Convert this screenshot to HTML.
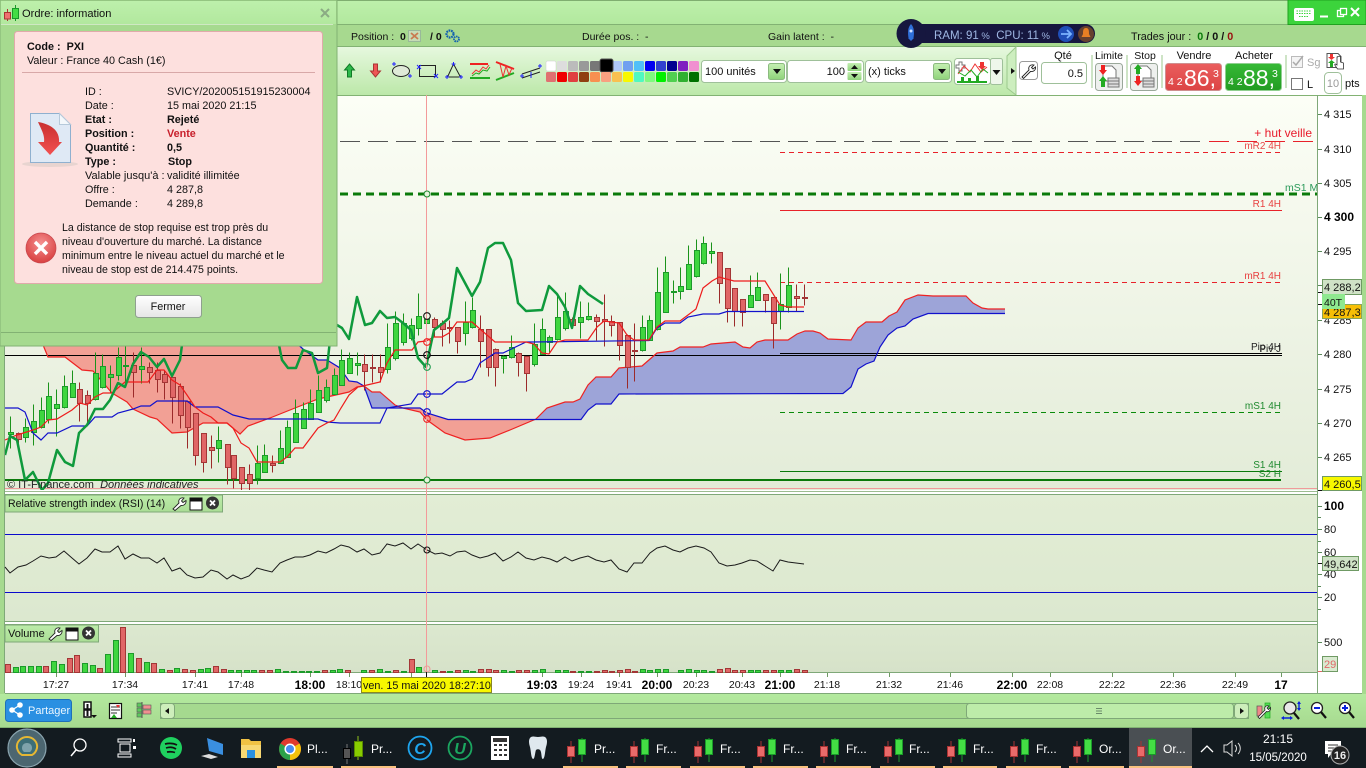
<!DOCTYPE html>
<html lang="fr"><head><meta charset="utf-8"><title>Ordre: information</title>
<style>
html,body{margin:0;padding:0;background:#a6da8f;overflow:hidden}
svg{display:block}
text{font-family:"Liberation Sans",sans-serif;font-size:10.6px;fill:#111;white-space:pre}
.b{font-weight:bold}
.ax{font-size:11px}
.t{font-size:10.5px}
.tb{font-size:12px;font-weight:bold;fill:#000}
.lb{font-size:10px}
.w{fill:#fff;font-size:12px}
.m{text-anchor:middle}
.e{text-anchor:end}
</style></head><body>
<svg width="1366" height="768" viewBox="0 0 1366 768" xmlns="http://www.w3.org/2000/svg">
<defs>
<linearGradient id="gT" x1="0" y1="0" x2="0" y2="1"><stop offset="0" stop-color="#bdf0ab"/><stop offset="1" stop-color="#b2e89e"/></linearGradient>
<linearGradient id="gB" x1="0" y1="0" x2="0" y2="1"><stop offset="0" stop-color="#b4ea9f"/><stop offset="1" stop-color="#a6d98f"/></linearGradient>
<linearGradient id="gTool" x1="0" y1="0" x2="0" y2="1"><stop offset="0" stop-color="#e6f8de"/><stop offset="1" stop-color="#bce8a9"/></linearGradient>
<linearGradient id="gC" x1="0" y1="0" x2="0" y2="1"><stop offset="0" stop-color="#fcfef6"/><stop offset="1" stop-color="#e3ecd8"/></linearGradient>
<linearGradient id="gR" x1="0" y1="0" x2="0" y2="1"><stop offset="0" stop-color="#e2edd5"/><stop offset="1" stop-color="#dce8cf"/></linearGradient>
<linearGradient id="gV" x1="0" y1="0" x2="0" y2="1"><stop offset="0" stop-color="#dce8cf"/><stop offset="1" stop-color="#d6e2c9"/></linearGradient>
<linearGradient id="gLb" x1="0" y1="0" x2="0" y2="1"><stop offset="0" stop-color="#bdecaa"/><stop offset="1" stop-color="#aadd95"/></linearGradient>
<linearGradient id="gSell" x1="0" y1="0" x2="0" y2="1"><stop offset="0" stop-color="#ea5e5e"/><stop offset="1" stop-color="#dc4444"/></linearGradient>
<linearGradient id="gBuy" x1="0" y1="0" x2="0" y2="1"><stop offset="0" stop-color="#36b936"/><stop offset="1" stop-color="#229c22"/></linearGradient>
<linearGradient id="gBtn" x1="0" y1="0" x2="0" y2="1"><stop offset="0" stop-color="#fff"/><stop offset="1" stop-color="#e6e6e6"/></linearGradient>
<linearGradient id="gGrBtn" x1="0" y1="0" x2="0" y2="1"><stop offset="0" stop-color="#c4efb2"/><stop offset="1" stop-color="#8fd37a"/></linearGradient>
<linearGradient id="gArr" x1="0" y1="0" x2="0" y2="1"><stop offset="0" stop-color="#c93030"/><stop offset="1" stop-color="#f25050"/></linearGradient>
<radialGradient id="gErr" cx=".5" cy=".35" r=".7"><stop offset="0" stop-color="#f59090"/><stop offset="1" stop-color="#d63a3a"/></radialGradient>
<clipPath id="cC"><rect x="5" y="96" width="1312" height="394"/></clipPath>
<g id="cd"><path d="M4 -11V11" stroke="#a33" fill="none"/><rect x=".5" y="-5.5" width="7" height="10" fill="#ea6a6a" stroke="#a33"/><path d="M15 -14V10" stroke="#1a9a2a"/><rect x="11.5" y="-12.5" width="7" height="15" fill="#44dd44" stroke="#1a9a2a"/></g>
</defs>

<!-- base -->
<rect width="1366" height="768" fill="#a6da8f"/>
<rect y="0" width="1366" height="24" fill="url(#gT)"/>
<rect width="1366" height="1" fill="#7fae70"/>
<rect y="24" width="1366" height="1" fill="#82b273"/>
<rect y="25" width="1366" height="21" fill="#a7d98f"/>
<rect y="46" width="1366" height="1" fill="#82b273"/>
<rect y="47" width="1366" height="48" fill="url(#gTool)"/>
<path d="M1016 95V47H1366V95Z" fill="#fff"/>
<path d="M1007 88V56L1016 47V95Z" fill="#cdeebf" stroke="#9cc98d"/>
<rect x="5" y="95" width="1357" height="598" fill="#fff"/>
<rect y="95" width="1366" height="1" fill="#82b273"/>
<rect x="1362" y="95" width="4" height="633" fill="#a6da8f"/>
<rect x="0" y="95" width="4" height="633" fill="#a6da8f"/>
<rect x="4" y="95" width="1" height="598" fill="#7fa878"/>

<!-- chart -->
<rect x="5" y="96" width="1312" height="394" fill="url(#gC)"/>
<g clip-path="url(#cC)">
<polygon fill="#f2a095" points="36,333 41,340 48,357 65,357 82,370 93,371 112,393 127,402 133,409 150,417 157,419 172,433 187,432 203,423 227,423 240,434 248,426 270,418 295,408 318,399 349,392 357,387 364,386 357,382 349,381 340,368 327,360 318,360 303,349 293,340 285,333"/>
<polygon fill="#f2a095" points="396,406 403,408 420,412 427,420 445,433 465,440 490,438 510,430 536,419 448,419 427,413 420,408 396,408"/>
<polygon fill="#9da4d8" points="364,386 372,392 380,392 395,405 396,408 372,408"/>
<polygon fill="#9da4d8" points="536,419 547,408 565,402 573,402 580,399 588,385 596,377 611,377 619,368 642,366 657,353 673,351 680,347 703,347 711,344 735,342 743,347 750,348 757,342 765,340 788,340 797,334 805,331 813,331 820,333 828,339 851,340 858,328 866,322 882,322 889,316 897,312 905,300 918,295 933,296 966,296 973,303 982,308 988,309 1005,309 1005,313 928,313 913,319 905,326 897,328 888,335 880,347 874,361 866,364 858,369 851,387 843,393 619,394 611,404 596,404 588,410 581,419"/>

<!-- horizontal levels -->
<path d="M340 141.5H1200" stroke="#555" stroke-dasharray="20 8" fill="none"/>
<path d="M1209 141.5H1313" stroke="#e8222a" stroke-dasharray="20 8" fill="none"/>
<path d="M780 152.5H1282" stroke="#e8222a" stroke-dasharray="5 4" fill="none"/>
<path d="M340 194H1317" stroke="#0a7a0a" stroke-width="3" stroke-dasharray="8 5" fill="none"/>
<path d="M780 210.5H1282" stroke="#e8222a" fill="none"/>
<path d="M780 282.5H1282" stroke="#e8222a" stroke-dasharray="5 4" fill="none"/>
<path d="M780 412.5H1282" stroke="#0a8a0a" stroke-dasharray="5 4" fill="none"/>
<path d="M780 471.5H1282" stroke="#0a7a0a" fill="none"/>
<path d="M5 480H1281" stroke="#0a7a0a" stroke-width="2" fill="none"/>
<path d="M5 488.5H1317" stroke="#f09a9a" fill="none"/>
<path d="M780 353.5H1282" stroke="#000" fill="none"/>
<path d="M5 355.5H1282" stroke="#000" fill="none"/>

<!-- senkou -->
<polyline fill="none" stroke="#ee2222" stroke-width="1.2" points="36,333 41,340 48,357 65,357 82,370 93,371 112,393 127,402 133,409 150,417 157,419 172,433 187,432 203,423 227,423 240,434 248,426 270,418 295,408 318,399 349,392 357,387 364,386 372,392 380,392 395,405 403,408 420,412 427,420 445,433 465,440 490,438 510,430 536,419 547,408 565,402 573,402 580,399 588,385 596,377 611,377 619,368 642,366 657,353 673,351 680,347 703,347 711,344 735,342 743,347 750,348 757,342 765,340 788,340 797,334 805,331 813,331 820,333 828,339 851,340 858,328 866,322 882,322 889,316 897,312 905,300 918,295 933,296 966,296 973,303 982,308 988,309 1005,309"/>
<polyline fill="none" stroke="#1111cc" stroke-width="1.2" points="285,333 293,340 303,349 318,360 327,360 340,368 349,381 357,382 364,386 372,408 395,408 420,408 427,413 448,419.5 581,419.5 588,410 596,404 611,404 619,394 843,393.5 851,387 858,369 866,364 874,361 880,347 888,335 897,328 905,326 913,319 928,313.5 1005,313.5"/>

<!-- candles -->
<g transform="translate(.5,.5)">
<path fill="none" stroke="#1b931b" d="M10 416V448M25 418V442M33 404V445M41 397V428M48 382V423M56 389V436M64 375V408M72 370V397M95 352V400M102 354V388M110 365V393M118 347V380M125 340V381M141 347V383M218 426V462M257 445V484M264 444V472M280 430V463M287 420V457M295 399V442M303 402V428M310 389V419M318 375V412M326 379V402M334 368V394M341 349V385M349 352V373M357 352V375M387 323V373M395 311V360M403 313V345M411 318V340M418 293V335M426 313V325M465 301V345M472 297V328M503 355V373M511 335V358M534 323V366M542 318V354M549 335V352M557 296V340M565 292V330M580 301V338M588 302V320M642 315V351M649 315V340M657 267V330M665 256V312M673 280V303M680 267V299M688 245V289M696 239V277M703 236V264M711 242V263M750 275V307M757 272V300M780 273V329M788 267V312"/>
<path fill="none" stroke="#9b2a2a" d="M18 432V446M79 382V421M87 390V423M133 352V397M149 362V383M157 362V392M164 370V399M172 377V423M180 383V428M187 400V448M195 413V465M203 433V472M211 435V468M227 444V484M233 455V488M241 467V492M249 464V492M272 455V472M364 354V390M372 354V382M380 354V382M434 317V337M442 320V346M449 320V343M457 327V353M480 315V367M488 329V376M495 348V386M518 352V376M526 356V391M572 317V328M596 314V340M604 294V346M611 315V336M619 322V360M627 334V388M634 323V381M719 252V303M727 268V322M734 288V326M742 299V326M765 294V312M773 297V348M796 284V311M804 284V305"/>
<path fill="#3fd63f" stroke="#1c9a2a" d="M8 432h5V434h-5zM23 427h5V437h-5zM31 421h5V432h-5zM39 410h5V427h-5zM46 396h5V419h-5zM54 404h5V408h-5zM62 386h5V407h-5zM70 383h5V397h-5zM93 373h5V399h-5zM100 366h5V387h-5zM108 374h5V377h-5zM116 357h5V375h-5zM123 365h5V366h-5zM139 366h5V369h-5zM216 440h5V448h-5zM255 463h5V478h-5zM262 455h5V472h-5zM278 448h5V463h-5zM285 427h5V457h-5zM293 413h5V442h-5zM301 409h5V428h-5zM308 403h5V419h-5zM316 390h5V412h-5zM324 387h5V400h-5zM332 375h5V394h-5zM339 360h5V385h-5zM347 358h5V373h-5zM355 363h5V365h-5zM385 347h5V369h-5zM393 323h5V358h-5zM401 323h5V342h-5zM409 325h5V338h-5zM416 316h5V328h-5zM424 319h5V323h-5zM463 322h5V333h-5zM470 310h5V327h-5zM501 356h5V358h-5zM509 347h5V357h-5zM532 344h5V364h-5zM540 329h5V354h-5zM547 337h5V342h-5zM555 317h5V339h-5zM563 311h5V328h-5zM578 317h5V322h-5zM586 316h5V319h-5zM640 327h5V350h-5zM647 320h5V340h-5zM655 292h5V329h-5zM663 272h5V312h-5zM671 291h5V292h-5zM678 286h5V291h-5zM686 264h5V289h-5zM694 250h5V276h-5zM701 243h5V263h-5zM709 251h5V253h-5zM748 295h5V307h-5zM755 287h5V300h-5zM778 304h5V311h-5zM786 285h5V307h-5z"/>
<path fill="#e06666" stroke="#a33636" d="M16 433h5V439h-5zM77 389h5V403h-5zM85 395h5V403h-5zM131 365h5V372h-5zM147 367h5V372h-5zM155 370h5V379h-5zM162 374h5V382h-5zM170 377h5V397h-5zM178 386h5V415h-5zM185 401h5V427h-5zM193 413h5V455h-5zM201 433h5V462h-5zM209 447h5V450h-5zM225 444h5V467h-5zM231 455h5V478h-5zM239 467h5V483h-5zM247 474h5V483h-5zM270 463h5V465h-5zM362 364h5V371h-5zM370 367h5V368h-5zM378 367h5V372h-5zM432 319h5V327h-5zM440 323h5V329h-5zM447 327h5V328h-5zM455 327h5V341h-5zM478 329h5V341h-5zM486 329h5V367h-5zM493 349h5V367h-5zM516 353h5V362h-5zM524 356h5V373h-5zM570 319h5V325h-5zM594 317h5V321h-5zM602 319h5V321h-5zM609 321h5V325h-5zM617 322h5V345h-5zM625 335h5V367h-5zM632 350h5V351h-5zM717 252h5V283h-5zM725 268h5V308h-5zM732 288h5V311h-5zM740 299h5V312h-5zM763 294h5V300h-5zM771 297h5V323h-5zM794 296h5V298h-5zM802 297h5V298h-5z"/>
</g>

<!-- tenkan / kijun -->
<polyline fill="none" stroke="#1111cc" stroke-width="1.2" points="5,408 18,408 25,412 33,433 41,440 48,433 57,433 72,426 87,426 95,417 112,417 118,413 133,409 141,406 150,406 157,401 187,401 195,407 218,407 233,415 249,419 318,419 327,422 340,423 380,423 387,408 411,404 418,394 442,394 457,382 465,382 472,379 480,363 495,353 503,353 526,342 533,342 649,340.5 657,328 665,323 680,323 688,317 703,314 719,314 727,311.5 804,311.5"/>
<polyline fill="none" stroke="#ee1c1c" stroke-width="1.2" points="5,440 17,435 33,430 41,427 48,420 57,419 72,410 80,403 87,405 95,397 103,393 112,393 125,382 133,382 148,382 157,370 164,370 172,380 180,385 187,395 195,407 203,413 211,417 218,423 227,423 233,428 241,443 249,448 257,462 280,462 287,457 295,448 303,448 318,428 327,423 334,420 341,408 349,395 358,387 367,385 380,382 387,363 395,350 412,350 418,342 426,341 434,337 442,337 449,333 457,322 472,322 480,329 495,342 526,342 534,344 542,353 549,354 557,342 565,340 588,340 597,327 604,321 619,323 627,335 634,340 649,340 657,327 665,321 680,321 696,309 703,288 712,281 719,277 734,281 765,281 780,305 788,307 804,307"/>
<!-- chikou -->
<polyline fill="none" stroke="#0f9a3c" stroke-width="2.5" stroke-linejoin="round" points="5,455 10,436 17,440 25,480 33,472 42,490 48,483 57,450 65,462 73,466 79,433 87,425 95,409 103,409 110,400 118,383 125,387 133,364 141,352 149,357 157,367 164,359 172,376 180,360 184,330"/>
<polyline fill="none" stroke="#0f9a3c" stroke-width="2.5" stroke-linejoin="round" points="278,340 282,360 288,368 296,368 303,350 312,353 318,373 327,368 330,340 337,325 342,328 349,339 357,297 365,325 372,323 380,311 387,318 395,317 403,323 411,330 418,358 426,367 434,330 442,324 449,318 457,268 472,296 480,282 488,248 495,243 503,243 511,260 518,303 526,311 542,310 549,286 557,294 565,307 572,328 580,286 588,294 603,304"/>

<!-- labels in chart -->
<text x="1312" y="137" class="e" style="font-size:12px;fill:#e81a2a">+ hut veille</text>
<text x="1281" y="149" class="e lb" style="fill:#e84a4a">mR2 4H</text>
<text x="1285" y="191" style="font-size:10.5px;fill:#2a9a5a">mS1 M</text>
<text x="1281" y="207" class="e lb" style="fill:#e84040">R1 4H</text>
<text x="1281" y="279" class="e lb" style="fill:#e84040">mR1 4H</text>
<text x="1281" y="350" class="e lb" style="fill:#222">Pip 4H</text>
<text x="1281" y="352" class="e lb" style="fill:#222">Piv J</text>
<text x="1281" y="409" class="e lb" style="fill:#1f8a2f">mS1 4H</text>
<text x="1281" y="468" class="e lb" style="fill:#1f8a2f">S1 4H</text>
<text x="1281" y="477" class="e lb" style="fill:#1f8a2f">S2 H</text>
<text x="7" y="488" style="font-size:11px;fill:#222">© IT-Finance.com  <tspan font-style="italic">Données indicatives</tspan></text>
</g>
<path d="M5 491.5H1317" stroke="#9cbc90"/>
<path d="M1317.5 95V693" stroke="#7fa878"/>

<!-- RSI pane -->
<rect x="4.5" y="494.5" width="1313" height="127" fill="url(#gR)" stroke="#7fa878"/>
<path d="M5 534.5H1317M5 592.5H1317" stroke="#0a0acc" fill="none"/>
<polyline fill="none" stroke="#1a1a1a" points="5,567 10,573 18,567 26,565 33,561 41,556 49,558 56,557 64,551 72,558 79,564 87,558 95,549 102,552 110,552 118,546 125,559 133,554 141,558 149,558 157,563 164,558 172,571 180,568 187,575 195,578 203,577 211,570 218,572 227,579 233,575 241,579 249,576 257,568 264,570 272,572 280,563 287,560 295,557 303,557 310,555 318,551 326,553 334,549 341,545 349,547 357,552 364,549 372,555 380,553 387,544 395,546 403,543 411,549 418,544 427,550 435,554 442,553 450,556 457,552 465,551 472,555 480,558 488,556 495,553 503,561 511,557 518,552 526,558 534,560 542,557 550,559 557,562 565,557 572,561 580,558 588,556 596,560 604,562 611,560 619,569 627,572 634,563 642,563 650,553 657,548 665,546 673,550 680,552 688,548 696,546 704,548 711,552 719,563 727,566 735,565 742,563 750,560 757,561 765,566 773,571 780,560 788,562 796,563 804,564"/>

<!-- volume pane -->
<rect x="4.5" y="624.5" width="1313" height="48" fill="url(#gV)" stroke="#7fa878"/>
<g transform="translate(.5,.5)">
<path fill="#3fd63f" stroke="#1c9a2a" d="M13 667h5V672h-5zM20 666h5V672h-5zM28 666h5V672h-5zM36 666h5V672h-5zM51 661h5V672h-5zM59 664h5V672h-5zM82 663h5V672h-5zM90 665h5V672h-5zM105 654h5V672h-5zM113 640h5V672h-5zM128 653h5V672h-5zM144 662h5V672h-5zM159 669h5V672h-5zM174 668h5V672h-5zM198 669h5V672h-5zM205 668h5V672h-5zM228 670h5V672h-5zM236 670h5V672h-5zM244 670h5V672h-5zM251 670h5V672h-5zM275 669h5V672h-5zM283 671h5V672h-5zM291 671h5V672h-5zM299 671h5V672h-5zM306 671h5V672h-5zM314 671h5V672h-5zM330 670h5V672h-5zM337 669h5V672h-5zM361 670h5V672h-5zM377 669h5V672h-5zM385 671h5V672h-5zM401 671h5V672h-5zM416 667h5V672h-5zM432 670h5V672h-5zM447 671h5V672h-5zM463 670h5V672h-5zM470 671h5V672h-5zM501 670h5V672h-5zM509 671h5V672h-5zM532 670h5V672h-5zM540 669h5V672h-5zM555 670h5V672h-5zM563 670h5V672h-5zM578 671h5V672h-5zM586 671h5V672h-5zM640 669h5V672h-5zM647 670h5V672h-5zM655 669h5V672h-5zM663 669h5V672h-5zM678 670h5V672h-5zM686 669h5V672h-5zM694 670h5V672h-5zM701 670h5V672h-5zM709 671h5V672h-5zM748 670h5V672h-5zM755 670h5V672h-5zM778 670h5V672h-5zM786 670h5V672h-5z"/>
<path fill="#e06666" stroke="#a33636" d="M5 664h5V672h-5zM43 666h5V672h-5zM67 658h5V672h-5zM74 655h5V672h-5zM97 668h5V672h-5zM120 627h5V672h-5zM136 658h5V672h-5zM151 663h5V672h-5zM167 670h5V672h-5zM182 669h5V672h-5zM190 670h5V672h-5zM213 666h5V672h-5zM221 669h5V672h-5zM259 670h5V672h-5zM267 670h5V672h-5zM322 670h5V672h-5zM345 670h5V672h-5zM369 670h5V672h-5zM393 670h5V672h-5zM409 659h5V672h-5zM440 671h5V672h-5zM455 670h5V672h-5zM478 669h5V672h-5zM486 669h5V672h-5zM493 670h5V672h-5zM516 670h5V672h-5zM524 670h5V672h-5zM570 671h5V672h-5zM594 671h5V672h-5zM602 670h5V672h-5zM609 671h5V672h-5zM617 670h5V672h-5zM625 669h5V672h-5zM632 671h5V672h-5zM717 669h5V672h-5zM725 668h5V672h-5zM732 670h5V672h-5zM740 670h5V672h-5zM763 670h5V672h-5zM771 670h5V672h-5zM794 669h5V672h-5zM802 670h5V672h-5z"/>
</g>

<!-- crosshair -->
<path d="M426.5 95V672" stroke="#f39a9a" fill="none"/>
<g fill="none" stroke-width="1.1">
<circle cx="427" cy="194" r="3" stroke="#1f8a2f" fill="#e6f4dc"/>
<circle cx="427" cy="316" r="3.3" stroke="#111"/>
<circle cx="427" cy="342" r="3.3" stroke="#ee2222"/>
<circle cx="427" cy="355" r="3.3" stroke="#111"/>
<circle cx="427" cy="367" r="3.3" stroke="#1f9a4f"/>
<circle cx="427" cy="394" r="3.3" stroke="#1111cc"/>
<circle cx="427" cy="412" r="3.3" stroke="#1111cc"/>
<circle cx="427" cy="419" r="3.3" stroke="#ee2222"/>
<circle cx="427" cy="480" r="3" stroke="#1f8a2f" fill="#e6f4dc"/>
<circle cx="427" cy="550" r="3" stroke="#111"/>
<circle cx="427" cy="669" r="3" stroke="#f09a9a"/>
</g>

<!-- RSI & volume label boxes -->
<rect x="5" y="495" width="217.5" height="17" fill="url(#gLb)" stroke="#7fa878"/>
<text x="8" y="507" style="font-size:10.6px">Relative strength index (RSI) (14)</text>
<path d="M173 509l6-6c-1-3 1-6 5-5l-2.5 3 1.5 1.5 3-2c.5 3-2 5.5-5 5l-6 5z" fill="#fff" stroke="#222" stroke-width=".9"/>
<rect x="190" y="498" width="12" height="12" fill="#fff" stroke="#111"/><rect x="190" y="498" width="12" height="3.5" fill="#111"/>
<circle cx="212.5" cy="503" r="6.5" fill="#333"/><path d="M210 500.5l5 5M215 500.5l-5 5" stroke="#fff" stroke-width="1.8"/>

<rect x="5" y="625" width="93.5" height="17" fill="url(#gLb)" stroke="#7fa878"/>
<text x="8" y="637" style="font-size:11px">Volume</text>
<path d="M49 639l6-6c-1-3 1-6 5-5l-2.5 3 1.5 1.5 3-2c.5 3-2 5.5-5 5l-6 5z" fill="#fff" stroke="#222" stroke-width=".9"/>
<rect x="66" y="628" width="12" height="12" fill="#fff" stroke="#111"/><rect x="66" y="628" width="12" height="3.5" fill="#111"/>
<circle cx="88.5" cy="633" r="6.5" fill="#333"/><path d="M86 630.5l5 5M91 630.5l-5 5" stroke="#fff" stroke-width="1.8"/>

<!-- price axis -->
<path d="M1318 114.5h4M1318 149.5h4M1318 183.5h4M1318 217.5h4M1318 251.5h4M1318 285.5h4M1318 320.5h4M1318 354.5h4M1318 389.5h4M1318 423.5h4M1318 457.5h4M1318 506.5h4M1318 517.5h3M1318 529.5h4M1318 541.5h3M1318 552.5h4M1318 574.5h4M1318 586.5h3M1318 597.5h4M1318 609.5h3M1318 642.5h4" stroke="#5b8a5b"/>
<path d="M1318 292.5h4M1318 304.5h4M1318 490.5h4M1318 563.5h4" stroke="#111"/>
<path d="M1318 671.5h4" stroke="#e06666"/>
<text x="1324" y="118" class="ax">4 315</text>
<text x="1324" y="153" class="ax">4 310</text>
<text x="1324" y="187" class="ax">4 305</text>
<text x="1324" y="221" class="b" style="font-size:12px;fill:#000">4 300</text>
<text x="1324" y="255" class="ax">4 295</text>
<text x="1324" y="324" class="ax">4 285</text>
<text x="1324" y="358" class="ax">4 280</text>
<text x="1324" y="393" class="ax">4 275</text>
<text x="1324" y="427" class="ax">4 270</text>
<text x="1324" y="461" class="ax">4 265</text>
<rect x="1322.5" y="279.5" width="39" height="15" fill="#cfe2c6" stroke="#6f9a64"/>
<text x="1324" y="291" class="ax">4 288,2</text>
<rect x="1322.5" y="304.5" width="39" height="14" fill="#f7bf06" stroke="#8aa55a"/>
<text x="1324" y="316" class="ax">4 287,3</text>
<rect x="1322" y="294" width="23" height="15" fill="#8fe88f"/>
<text x="1324" y="306" style="font-size:10.5px">40T</text>
<rect x="1322.5" y="476.5" width="39" height="14" fill="#f8f800" stroke="#6f9a64"/>
<text x="1324" y="488" class="ax">4 260,5</text>

<text x="1324" y="510" class="b" style="font-size:12px;fill:#000">100</text>
<text x="1324" y="533" class="ax">80</text>
<text x="1324" y="556" class="ax">60</text>
<text x="1324" y="578" class="ax">40</text>
<rect x="1322.5" y="556.5" width="36" height="14" fill="#cfe2c6" stroke="#6f9a64"/>
<text x="1324" y="568" class="ax">49,642</text>
<text x="1324" y="601" class="ax">20</text>
<text x="1324" y="646" class="ax">500</text>
<rect x="1322.5" y="656.5" width="15" height="15" fill="#d9ead0" stroke="#6f9a64"/>
<text x="1324" y="668" class="ax" style="fill:#e06868">29</text>

<!-- time axis -->
<path d="M56.5 673v4M125.5 673v4M195.5 673v4M241.5 673v4M310.5 673v4M349.5 673v4M411.5 673v4M542.5 673v4M581.5 673v4M619.5 673v4M657.5 673v4M696.5 673v4M742.5 673v4M780.5 673v4M827.5 673v4M889.5 673v4M950.5 673v4M1012.5 673v4M1050.5 673v4M1112.5 673v4M1173.5 673v4M1235.5 673v4M1281.5 673v4" stroke="#6f9a64"/>
<path d="M426.5 672v5" stroke="#111"/>
<text x="56" y="688" class="t m">17:27</text>
<text x="125" y="688" class="t m">17:34</text>
<text x="195" y="688" class="t m">17:41</text>
<text x="241" y="688" class="t m">17:48</text>
<text x="310" y="689" class="tb m">18:00</text>
<text x="349" y="688" class="t m">18:10</text>
<text x="542" y="689" class="tb m">19:03</text>
<text x="581" y="688" class="t m">19:24</text>
<text x="619" y="688" class="t m">19:41</text>
<text x="657" y="689" class="tb m">20:00</text>
<text x="696" y="688" class="t m">20:23</text>
<text x="742" y="688" class="t m">20:43</text>
<text x="780" y="689" class="tb m">21:00</text>
<text x="827" y="688" class="t m">21:18</text>
<text x="889" y="688" class="t m">21:32</text>
<text x="950" y="688" class="t m">21:46</text>
<text x="1012" y="689" class="tb m">22:00</text>
<text x="1050" y="688" class="t m">22:08</text>
<text x="1112" y="688" class="t m">22:22</text>
<text x="1173" y="688" class="t m">22:36</text>
<text x="1235" y="688" class="t m">22:49</text>
<text x="1281" y="689" class="tb m">17</text>
<rect x="361.5" y="677.5" width="130" height="15" fill="#f8f800" stroke="#8a8a20"/>
<text x="363" y="689" style="font-size:10.8px">ven. 15 mai 2020 18:27:10</text>
<path d="M5 693.5H1362" stroke="#7fa878"/>

<!-- bottom toolbar -->
<rect x="0" y="694" width="1366" height="34" fill="url(#gB)"/>
<path d="M0 727.5H1366" stroke="#82b273"/>
<rect x="5.5" y="699.5" width="66" height="22" rx="3" fill="#2a90e2" stroke="#1f70b8"/>
<circle cx="12" cy="710" r="2.8" fill="#fff"/><circle cx="20" cy="705" r="2.8" fill="#fff"/><circle cx="20" cy="715" r="2.8" fill="#fff"/><path d="M12 710L20 705M12 710L20 715" stroke="#fff" stroke-width="1.2"/>
<text x="28" y="714" style="font-size:11px;fill:#eaf6ff">Partager</text>
<!-- link icon -->
<path d="M84 702h7v7h-7zM84 710h7v7h-7z" fill="#fff" stroke="#111" stroke-width="1.5"/><path d="M87.5 704v12" stroke="#111" stroke-width="2"/><path d="M91 715h6l-3 3z" fill="#111"/>
<rect x="109.5" y="703.5" width="12" height="15" fill="#fff" stroke="#111" stroke-width="1.2"/><path d="M111 707h9M111 710h9M111 713h6" stroke="#333"/><path d="M116 705l4 0-2 3z" fill="#e33"/><path d="M111 718l3-4 3 4z" fill="#2a2"/>
<rect x="137" y="703" width="5" height="4" fill="#5cc85c" stroke="#555" stroke-width=".6"/><rect x="143" y="705" width="8" height="4" fill="#f09090" stroke="#555" stroke-width=".6"/><rect x="137" y="708" width="5" height="4" fill="#5cc85c" stroke="#555" stroke-width=".6"/><rect x="143" y="710" width="8" height="4" fill="#f09090" stroke="#555" stroke-width=".6"/><rect x="137" y="713" width="5" height="4" fill="#5cc85c" stroke="#555" stroke-width=".6"/><path d="M142 702v16" stroke="#555"/>
<!-- scrollbar -->
<rect x="160.5" y="703.5" width="1088" height="15" fill="#a5d98f" stroke="#7fa878"/>
<rect x="160.5" y="703.5" width="14" height="15" rx="3" fill="#cdeebb" stroke="#7fa878"/><path d="M169 708v6l-4-3z" fill="#111"/>
<rect x="966.5" y="703.5" width="267" height="15" rx="3" fill="#bdeca9" stroke="#7fa878"/><path d="M1096 708.5h6M1096 711h6M1096 713.5h6" stroke="#6a8a6a"/>
<rect x="1234.5" y="703.5" width="14" height="15" rx="3" fill="#cdeebb" stroke="#7fa878"/><path d="M1240 708v6l4-3z" fill="#111"/>
<!-- zoom icons -->
<rect x="1257" y="706" width="5" height="10" fill="#e88" stroke="#555" stroke-width=".7"/><rect x="1265" y="703" width="5" height="15" fill="#5d5" stroke="#2a2" stroke-width=".7"/><path d="M1258 717l7-7c-1-3 1-5 4-4l-2 2 1.5 1.5 2-2c.5 3-2 5-4 4l-7 7z" fill="#fff" stroke="#222" stroke-width=".8"/>
<circle cx="1290" cy="708" r="6" fill="#e8e8e8" stroke="#222" stroke-width="1.3"/><path d="M1294 713l5 6" stroke="#111" stroke-width="2.2"/><path d="M1299 702v8M1283 718h8" stroke="#0a22dd" stroke-width="1.4"/><path d="M1297 704l2-3 2 3zM1297 708l2 3 2-3zM1284 716l-3 2 3 2zM1290 716l3 2-3 2z" fill="#0a22dd"/>
<circle cx="1317" cy="708" r="5.5" fill="#fff" stroke="#222" stroke-width="1.3"/><path d="M1321 712l5 6" stroke="#111" stroke-width="2.2"/><path d="M1314 708h6" stroke="#0a22dd" stroke-width="2"/>
<circle cx="1345" cy="708" r="5.5" fill="#fff" stroke="#222" stroke-width="1.3"/><path d="M1349 712l5 6" stroke="#111" stroke-width="2.2"/><path d="M1342 708h6M1345 705v6" stroke="#0a22dd" stroke-width="2"/>

<!-- status row -->
<text x="351" y="40" style="font-size:10.5px">Position :</text>
<text x="400" y="40" class="b" style="font-size:10.5px">0</text>
<rect x="408.5" y="30.5" width="12" height="11" fill="#c6dcb6" stroke="#99b99a"/><path d="M411 33l7 6M418 33l-7 6" stroke="#c97b50" stroke-width="1.8"/>
<text x="430" y="40" class="b" style="font-size:10.5px">/ 0</text>
<circle cx="450" cy="34" r="3.5" fill="none" stroke="#1160b0" stroke-width="2.2" stroke-dasharray="1.7 .8"/><circle cx="456.5" cy="39" r="2.5" fill="none" stroke="#1160b0" stroke-width="1.8" stroke-dasharray="1.5 .7"/>
<text x="582" y="40" style="font-size:10.5px">Durée pos. :  -</text>
<text x="768" y="40" style="font-size:10.5px">Gain latent :  -</text>
<rect x="902" y="24" width="193" height="19" rx="9.5" fill="#16173f"/>
<circle cx="911" cy="33.5" r="14.5" fill="#16173f"/>
<path d="M911 24c3 3 3.5 8 2.5 14h-5c-1-6-.5-11 2.5-14z" fill="#2f6fd8"/><circle cx="911" cy="31" r="1.5" fill="#cfe0ff"/><path d="M908 38h6l-3 3z" fill="#2f6fd8"/>
<text x="934" y="39" style="font-size:11.5px;fill:#9fb7e3">RAM: 91<tspan style="font-size:9.5px"> %</tspan>  CPU: 11<tspan style="font-size:9.5px"> %</tspan></text>
<circle cx="1066" cy="34" r="8" fill="#1f4fb8"/><path d="M1061 34h9M1067 30l4 4-4 4" stroke="#7cb4ff" stroke-width="1.8" fill="none"/>
<circle cx="1086" cy="34" r="8" fill="#66412f"/><path d="M1086 28c3 0 3 3 3 6l1.5 3h-9l1.5-3c0-3 0-6 3-6z" fill="#e87f24"/>
<text x="1131" y="40" style="font-size:10.8px">Trades jour :  <tspan style="fill:#0a7a0a;font-weight:bold">0</tspan><tspan style="font-weight:bold"> / 0 / </tspan><tspan style="fill:#9a1010;font-weight:bold">0</tspan></text>

<!-- window buttons -->
<rect x="1288" y="0" width="78" height="24.5" fill="#3cd43c" stroke="#1fa21f"/>
<rect x="1294" y="8" width="20" height="13" rx="2" fill="#fff"/><path d="M1296.5 11h15M1296.5 13.5h15M1299 16.5h10" stroke="#3cd43c" stroke-width=".9" stroke-dasharray="1.5 1"/>
<path d="M1320 16.5h8" stroke="#fff" stroke-width="2"/>
<rect x="1337.5" y="10.5" width="6" height="6" fill="none" stroke="#fff" stroke-width="1.3"/><rect x="1340.5" y="8.5" width="6" height="6" fill="#3cd43c" stroke="#fff" stroke-width="1.3"/>
<path d="M1351 8l8 8M1359 8l-8 8" stroke="#fff" stroke-width="2"/>

<!-- toolbar -->
<path d="M349.5 64l5 6h-3v7h-4v-7h-3z" fill="#2db84a" stroke="#0f7a25"/>
<path d="M375.5 77l-5-6h3v-7h4v7h3z" fill="#e55" stroke="#a33"/>
<ellipse cx="401" cy="71" rx="8.5" ry="5.5" fill="#dfead8" stroke="#222"/><path d="M392 64h4M394 62v4M408 76h4M410 74v4" stroke="#22f"/>
<rect x="419.5" y="65.5" width="16" height="11" fill="none" stroke="#222"/><path d="M417 65l4 4M421 65l-4 4M434 74l4 4M438 74l-4 4" stroke="#22f"/>
<path d="M453.5 64l7 13h-13z" fill="none" stroke="#222"/><path d="M451.5 64h4M453.5 62v4M445 77h4M447 75v4M459 77h4M461 75v4" stroke="#22f"/>
<path d="M470 64h18" stroke="#e22" stroke-width="2"/><path d="M470 78h20" stroke="#2a2" stroke-width="2"/><path d="M472 74l4-4 3 2 4-5 3 2 3-4" stroke="#e33" fill="none"/><path d="M472 76l4-3 3 1 4-4 4 1 3-4" stroke="#2a2" fill="none"/>
<path d="M496 62l18 7" stroke="#e22" stroke-width="2"/><path d="M496 80l18-7" stroke="#2a2" stroke-width="2"/><path d="M500 64l3 13 3-11 3 9 3-7" stroke="#e33" fill="none"/>
<path d="M522 74l18-6M522 78l18-6" stroke="#222"/><path d="M531 72v6" stroke="#22f"/><path d="M520 76h4M522 74v4M538 66h4M540 64v4" stroke="#22f"/>
<!-- swatches -->
<g>
<rect x="546" y="61" width="10" height="10" rx="1.5" fill="#ffffff" stroke="#ccc" stroke-width=".5"/><rect x="557" y="61" width="10" height="10" rx="1.5" fill="#dddddd"/><rect x="568" y="61" width="10" height="10" rx="1.5" fill="#bbbbbb"/><rect x="579" y="61" width="10" height="10" rx="1.5" fill="#999999"/><rect x="590" y="61" width="10" height="10" rx="1.5" fill="#777777"/>
<rect x="612" y="61" width="10" height="10" rx="1.5" fill="#b0c8f8"/><rect x="623" y="61" width="10" height="10" rx="1.5" fill="#70a0f0"/><rect x="634" y="61" width="10" height="10" rx="1.5" fill="#50c0f8"/><rect x="645" y="61" width="10" height="10" rx="1.5" fill="#0000f0"/><rect x="656" y="61" width="10" height="10" rx="1.5" fill="#3040d0"/><rect x="667" y="61" width="10" height="10" rx="1.5" fill="#000090"/><rect x="678" y="61" width="10" height="10" rx="1.5" fill="#8020c0"/><rect x="689" y="61" width="10" height="10" rx="1.5" fill="#f090d0"/>
<rect x="600" y="59" width="13" height="13" rx="2" fill="#000" stroke="#555"/>
<rect x="546" y="72" width="10" height="10" rx="1.5" fill="#e07070"/><rect x="557" y="72" width="10" height="10" rx="1.5" fill="#f00000"/><rect x="568" y="72" width="10" height="10" rx="1.5" fill="#e04040"/><rect x="579" y="72" width="10" height="10" rx="1.5" fill="#904010"/><rect x="590" y="72" width="10" height="10" rx="1.5" fill="#f89050"/><rect x="601" y="72" width="10" height="10" rx="1.5" fill="#f8a080"/><rect x="612" y="72" width="10" height="10" rx="1.5" fill="#f8c050"/><rect x="623" y="72" width="10" height="10" rx="1.5" fill="#f8f800"/><rect x="634" y="72" width="10" height="10" rx="1.5" fill="#50f8c0"/><rect x="645" y="72" width="10" height="10" rx="1.5" fill="#80f880"/><rect x="656" y="72" width="10" height="10" rx="1.5" fill="#00f000"/><rect x="667" y="72" width="10" height="10" rx="1.5" fill="#50d050"/><rect x="678" y="72" width="10" height="10" rx="1.5" fill="#30b030"/><rect x="689" y="72" width="10" height="10" rx="1.5" fill="#007000"/>
</g>
<!-- selects -->
<rect x="701.5" y="60.5" width="85" height="22" rx="3" fill="#fff" stroke="#9fc09a"/>
<text x="705" y="75" style="font-size:11px">100 unités</text>
<rect x="768.5" y="63.5" width="16" height="16" rx="2" fill="url(#gGrBtn)" stroke="#8cba80"/><path d="M773 69h8l-4 5z" fill="#111"/>
<rect x="787.5" y="60.5" width="76" height="22" rx="3" fill="#fff" stroke="#9fc09a"/>
<text x="845" y="75" class="e" style="font-size:11px">100</text>
<rect x="847.5" y="63" width="14" height="8" fill="url(#gGrBtn)" rx="1"/><rect x="847.5" y="72" width="14" height="8" fill="url(#gGrBtn)" rx="1"/><path d="M851 69l3.5-4 3.5 4z" fill="#111"/><path d="M851 74l3.5 4 3.5-4z" fill="#111"/>
<rect x="865.5" y="60.5" width="86" height="22" rx="3" fill="#fff" stroke="#9fc09a"/>
<text x="868" y="75" style="font-size:11px">(x) ticks</text>
<rect x="933.5" y="63.5" width="16" height="16" rx="2" fill="url(#gGrBtn)" stroke="#8cba80"/><path d="M938 69h8l-4 5z" fill="#111"/>
<rect x="954.5" y="58.5" width="36" height="26" rx="3" fill="#fff" stroke="#9fc09a"/>
<rect x="990.5" y="58.5" width="12" height="26" rx="2" fill="#eef7ea" stroke="#9fc09a"/><path d="M992.5 70h8l-4 5z" fill="#111"/>
<path d="M956 65h3v-3h3v3h3v3h-3v3h-3v-3h-3z" fill="#fff" stroke="#777"/><path d="M958 74l6-8 6 6 5-8 6 8 6-5" stroke="#e33" fill="none"/><path d="M958 72l7 4 6-6 6 7 6-8 5 4" stroke="#2a2" fill="none"/><rect x="957" y="81" width="30" height="2" fill="#2a2"/><rect x="961" y="77" width="3" height="4" fill="#2a2"/><rect x="968" y="78" width="3" height="3" fill="#2a2"/><rect x="976" y="76" width="3" height="5" fill="#2a2"/><path d="M980 62h4v4h2l-4 4-4-4h2z" fill="#e33"/>
<path d="M1011 68v6l4-3z" fill="#111"/>
<!-- right trade panel -->
<rect x="1019.5" y="61.5" width="18" height="18" rx="3" fill="#fff" stroke="#9a9a9a"/><path d="M1022 77l7-7c-1-3 1-6 5-5l-2.5 2.5 1.5 1.5 2.5-2c.5 3-2 5-5 4.5l-7 7z" fill="#fff" stroke="#222" stroke-width=".9"/>
<path d="M1092 55v33M1127 55v33M1162 55v33M1286 55v33" stroke="#9cc98d"/>
<text x="1063" y="59" class="m" style="font-size:11px">Qté</text>
<rect x="1041.5" y="62.5" width="45" height="21" rx="3" fill="#fff" stroke="#9fc09a"/>
<text x="1083" y="77" class="e" style="font-size:11px">0.5</text>
<text x="1109" y="59" class="m" style="font-size:10.5px">Limite</text>
<rect x="1095.5" y="63.5" width="27" height="27" rx="3" fill="#eef0ee" stroke="#9aa89a"/>
<path d="M1103 66h9l4 4v11h-13z" fill="#fff" stroke="#777"/><path d="M1101 65h4v5h2l-4 5-4-5h2z" fill="#e22"/><path d="M1103 76l4 5h-2v6h-4v-6h-2z" fill="#2a2"/><rect x="1108" y="78" width="11" height="9" fill="#ddd" stroke="#777"/><path d="M1108 81h11M1108 84h11" stroke="#777"/>
<text x="1145" y="59" class="m" style="font-size:10.5px">Stop</text>
<rect x="1130.5" y="63.5" width="27" height="27" rx="3" fill="#eef0ee" stroke="#9aa89a"/>
<path d="M1138 66h9l4 4v11h-13z" fill="#fff" stroke="#777"/><path d="M1138 64l4 5h-2v5h-4v-5h-2z" fill="#2a2"/><path d="M1136 76h4v5h2l-4 5-4-5h2z" fill="#e22"/><rect x="1143" y="78" width="11" height="9" fill="#ddd" stroke="#777"/><path d="M1143 81h11M1143 84h11" stroke="#777"/>
<text x="1194" y="59" class="m" style="font-size:11px">Vendre</text>
<rect x="1165.5" y="63.5" width="56" height="27" rx="3" fill="url(#gSell)" stroke="#cf8f8f"/>
<text x="1168" y="85" style="font-size:10.5px;fill:#fff">4 2</text>
<text x="1184" y="86" style="font-size:23px;fill:#fff">86,</text>
<text x="1213" y="77" style="font-size:10.5px;fill:#fff">3</text>
<text x="1254" y="59" class="m" style="font-size:11px">Acheter</text>
<rect x="1225.5" y="63.5" width="56" height="27" rx="3" fill="url(#gBuy)" stroke="#8fcf8f"/>
<text x="1228" y="85" style="font-size:10.5px;fill:#fff">4 2</text>
<text x="1243" y="86" style="font-size:23px;fill:#fff">88,</text>
<text x="1272" y="77" style="font-size:10.5px;fill:#fff">3</text>
<rect x="1291.5" y="56.5" width="11" height="11" fill="#f4f4f4" stroke="#bbb"/><path d="M1293 62l3 3 7-9" stroke="#aaa" stroke-width="1.5" fill="none"/>
<text x="1307" y="66" style="font-size:11px;fill:#aaa">Sg</text>
<rect x="1291.5" y="78.5" width="11" height="11" fill="#fff" stroke="#777"/>
<text x="1307" y="88" style="font-size:11px">L</text>
<path d="M1327 53.5h11l3 3v11h-14z" fill="#fff" stroke="#555"/><path d="M1330 54h3v3h2l-3.5 3-3.5-3h2z" fill="#e33"/><path d="M1331.5 60l3.5 3h-2v4h-3v-4h-2z" fill="#2a2"/>
<path d="M1337 57v8l-1.5-1c-1 0-1 1 0 2l2 3h6v-6l-3-1v-5c0-1-3-1-3 0z" fill="#fff" stroke="#333" stroke-width=".8"/>
<rect x="1324.5" y="72.5" width="17" height="21" rx="4" fill="#fff" stroke="#9fc09a"/>
<text x="1333" y="87" class="m" style="font-size:11px;fill:#999">10</text>
<text x="1345" y="87" style="font-size:11px">pts</text>

<!-- dialog -->
<rect x="0" y="0" width="337" height="346" fill="#a6da8f" stroke="#82b273"/>
<rect x="1" y="1" width="335" height="23" fill="url(#gT)"/>
<path d="M1 24.5H333" stroke="#cfe8c3"/>
<path d="M7.5 9v12" stroke="#a33"/><rect x="4.5" y="12.5" width="6" height="6.5" fill="#ee7070" stroke="#a33"/>
<path d="M15.500 5v16" stroke="#1a9a2a"/><rect x="12.5" y="8.5" width="6" height="10" fill="#44dd44" stroke="#1a9a2a"/>
<text x="22" y="17" style="font-size:11.1px">Ordre: information</text>
<path d="M321 9l8 8M329 9l-8 8" stroke="#8bab84" stroke-width="2"/>
<rect x="14.5" y="31.5" width="308" height="252" rx="3" fill="#fde0de" stroke="#e0aaaa"/>
<text x="27" y="50" class="b" style="font-size:10.8px">Code :  PXI</text>
<text x="27" y="64" style="font-size:10.8px">Valeur : France 40 Cash (1€)</text>
<path d="M22 72.5H315" stroke="#d8a8a8"/>
<g style="font-size:10.8px">
<text style="font-size:10.8px" x="85" y="95">ID :</text><text style="font-size:10.8px" x="167" y="95">SVICY/202005151915230004</text>
<text style="font-size:10.8px" x="85" y="109">Date :</text><text style="font-size:10.8px" x="167" y="109">15 mai 2020 21:15</text>
<text style="font-size:10.8px" x="85" y="123" class="b">Etat :</text><text style="font-size:10.8px" x="167" y="123" class="b">Rejeté</text>
<text style="font-size:10.8px" x="85" y="137" class="b">Position :</text><text x="167" y="137" class="b" style="font-size:10.8px;fill:#c8202c">Vente</text>
<text style="font-size:10.8px" x="85" y="151" class="b">Quantité :</text><text style="font-size:10.8px" x="167" y="151" class="b">0,5</text>
<text style="font-size:10.8px" x="85" y="165" class="b">Type :</text><text style="font-size:10.8px" x="168" y="165" class="b">Stop</text>
<text style="font-size:11px" x="85" y="179">Valable jusqu'à :</text><text style="font-size:10.8px" x="167" y="179">validité illimitée</text>
<text style="font-size:10.8px" x="85" y="193">Offre :</text><text style="font-size:10.8px" x="167" y="193">4 287,8</text>
<text style="font-size:10.8px" x="85" y="207">Demande :</text><text style="font-size:10.8px" x="167" y="207">4 289,8</text>
</g>
<text x="62" y="231">La distance de stop requise est trop près du</text>
<text x="62" y="245">niveau d'ouverture du marché. La distance</text>
<text x="62" y="259">minimum entre le niveau actuel du marché et le</text>
<text x="62" y="273">niveau de stop est de 214.475 points.</text>
<ellipse cx="50" cy="164" rx="28" ry="3" fill="#e8d4d0"/>
<path d="M30.5 113.5h29l11 11v38h-40z" fill="#dfe9f5" stroke="#8fb0cf"/>
<path d="M59.5 113.5v11h11z" fill="#f4f8fb" stroke="#b6c9da"/>
<path d="M38 122c12 2 22 8 21 20h3l-12 13-12-13h6c1-7-3-13-6-20z" fill="url(#gArr)"/>
<circle cx="41" cy="248" r="15" fill="url(#gErr)" stroke="#c7454c" stroke-width=".7"/>
<path d="M35 242l12 12M47 242l-12 12" stroke="#fff" stroke-width="3.4"/>
<rect x="135.5" y="295.5" width="66" height="22" rx="3" fill="url(#gBtn)" stroke="#8fa08f"/>
<text x="168" y="310" class="m" style="font-size:10.8px">Fermer</text>
<path d="M1 332.5H336" stroke="#82b273"/>

<!-- taskbar -->
<rect y="728" width="1366" height="40" fill="#131b20"/>
<circle cx="27" cy="748" r="19" fill="#4c6670" stroke="#8aa4ae" stroke-width="1.2"/>
<path d="M27 737c6 0 11 5 10 11-1 4-3 6-5 7h-10c-2-1-4-3-5-7-1-6 4-11 10-11z" fill="#3d6f78" stroke="#e6b733" stroke-width="2"/><path d="M27 743c3 0 5 2 5 5 0 2-1 3-2 4h-6c-1-1-2-2-2-4 0-3 2-5 5-5z" fill="#7fa3ab"/>
<circle cx="80" cy="745" r="6" fill="none" stroke="#fff" stroke-width="1.3"/><path d="M76 750l-5 6" stroke="#fff" stroke-width="1.5"/>
<path d="M118 739h13v3h-13zM118 754h13v3h-13zM120 744h10v8h-10z" fill="none" stroke="#fff"/><rect x="133" y="746" width="3" height="3" fill="#fff"/><rect x="133" y="739" width="2" height="3" fill="#fff"/>
<circle cx="171" cy="748" r="11" fill="#1fd15f"/><path d="M165 744c4-1 8-1 12 1M166 748c3-1 7-1 10 1M167 752c3-.5 5-.5 8 .5" stroke="#111" stroke-width="1.7" fill="none"/>
<path d="M207 738l16 6v11l-14-4z" fill="#3a8fe0"/><path d="M201 756l10 3 7-2-9-3z" fill="#ddd"/>
<path d="M241 739h8l2 2h10v17h-20z" fill="#f0c244"/><path d="M241 745h20v13h-20z" fill="#f7d873"/><rect x="247" y="750" width="8" height="8" fill="#2a90e0"/>
<circle cx="290" cy="749" r="11" fill="#e0392d"/><path d="M290 749L299.5 743.5A11 11 0 0 1 290 760z" fill="#f4c20d"/><path d="M290 749v11A11 11 0 0 1 280.5 743.5z" fill="#2ba24a"/><circle cx="290" cy="749" r="4.8" fill="#4a8cf0" stroke="#fff" stroke-width="1.5"/>
<text x="307" y="753" class="w">Pl...</text>
<path d="M347 744v20" stroke="#777"/><rect x="343.5" y="748.5" width="7" height="10" fill="#555" stroke="#000"/>
<path d="M358 736v24" stroke="#8fc11a"/><rect x="354.5" y="741.5" width="8" height="15" fill="#88cc00" stroke="#5a8a00"/>
<text x="371" y="753" class="w">Pr...</text>
<circle cx="420" cy="748" r="11.5" fill="none" stroke="#1ea5ee" stroke-width="1.8"/><text x="420" y="754" class="m" style="font-size:16px;fill:#1ea5ee;font-style:italic;font-weight:bold">C</text>
<circle cx="460" cy="748" r="11.5" fill="none" stroke="#1ba660" stroke-width="1.8"/><text x="460" y="754" class="m" style="font-size:16px;fill:#1ba660;font-style:italic;font-weight:bold">U</text>
<rect x="491" y="736" width="18" height="24" fill="#fff"/><rect x="493" y="738" width="14" height="4" fill="#333"/><path d="M494 745h3M499 745h3M504 745h3M494 750h3M499 750h3M504 750h3M494 755h3M499 755h3M504 755h3" stroke="#333" stroke-width="2"/>
<path d="M531 737c3-1 4 0 7 0s4-1 7 0c3 2 2 7 1 10-1 4-1 11-3 12-2 0-1-7-3-9-1-1-3-1-4 0-1 2-1 9-3 9-2-1-2-8-3-12-1-3-2-8 1-10z" fill="#dfe8ee"/>
<use href="#cd" x="567" y="752"/><text x="594" y="753" class="w">Pr...</text>
<use href="#cd" x="630" y="752"/><text x="656" y="753" class="w">Fr...</text>
<use href="#cd" x="694" y="752"/><text x="720" y="753" class="w">Fr...</text>
<use href="#cd" x="757" y="752"/><text x="783" y="753" class="w">Fr...</text>
<use href="#cd" x="820" y="752"/><text x="846" y="753" class="w">Fr...</text>
<use href="#cd" x="884" y="752"/><text x="909" y="753" class="w">Fr...</text>
<use href="#cd" x="947" y="752"/><text x="973" y="753" class="w">Fr...</text>
<use href="#cd" x="1010" y="752"/><text x="1036" y="753" class="w">Fr...</text>
<use href="#cd" x="1073" y="752"/><text x="1099" y="753" class="w">Or...</text>
<rect x="1129" y="728" width="63" height="40" fill="#4a4f53"/>
<use href="#cd" x="1137" y="752"/><text x="1163" y="753" class="w">Or...</text>
<g fill="#f8c27f">
<rect x="277" y="766" width="56" height="2"/><rect x="341" y="766" width="55" height="2"/><rect x="563" y="766" width="55" height="2"/><rect x="626" y="766" width="55" height="2"/><rect x="690" y="766" width="55" height="2"/><rect x="753" y="766" width="55" height="2"/><rect x="816" y="766" width="55" height="2"/><rect x="880" y="766" width="55" height="2"/><rect x="943" y="766" width="54" height="2"/><rect x="1006" y="766" width="55" height="2"/><rect x="1069" y="766" width="55" height="2"/><rect x="1129" y="766" width="63" height="2"/>
</g>
<path d="M1201 752l6-6 6 6" fill="none" stroke="#fff" stroke-width="1.3"/>
<path d="M1224 745h3l5-4v15l-5-4h-3z" fill="none" stroke="#ddd"/><path d="M1235 745c2 2 2 5 0 7M1238 743c3 3 3 8 0 11" fill="none" stroke="#ddd"/>
<text x="1278" y="743" class="m" style="fill:#fff;font-size:12px">21:15</text>
<text x="1278" y="761" class="m" style="fill:#fff;font-size:11.5px">15/05/2020</text>
<path d="M1325 741h16v13h-10l-3 4v-4h-3z" fill="#fff"/><path d="M1328 745h10M1328 748h10M1328 751h7" stroke="#333"/>
<circle cx="1340" cy="755" r="9" fill="#222" stroke="#aaa"/><text x="1340" y="759" class="m b" style="fill:#eee;font-size:11px;font-weight:bold">16</text>
</svg>
</body></html>
